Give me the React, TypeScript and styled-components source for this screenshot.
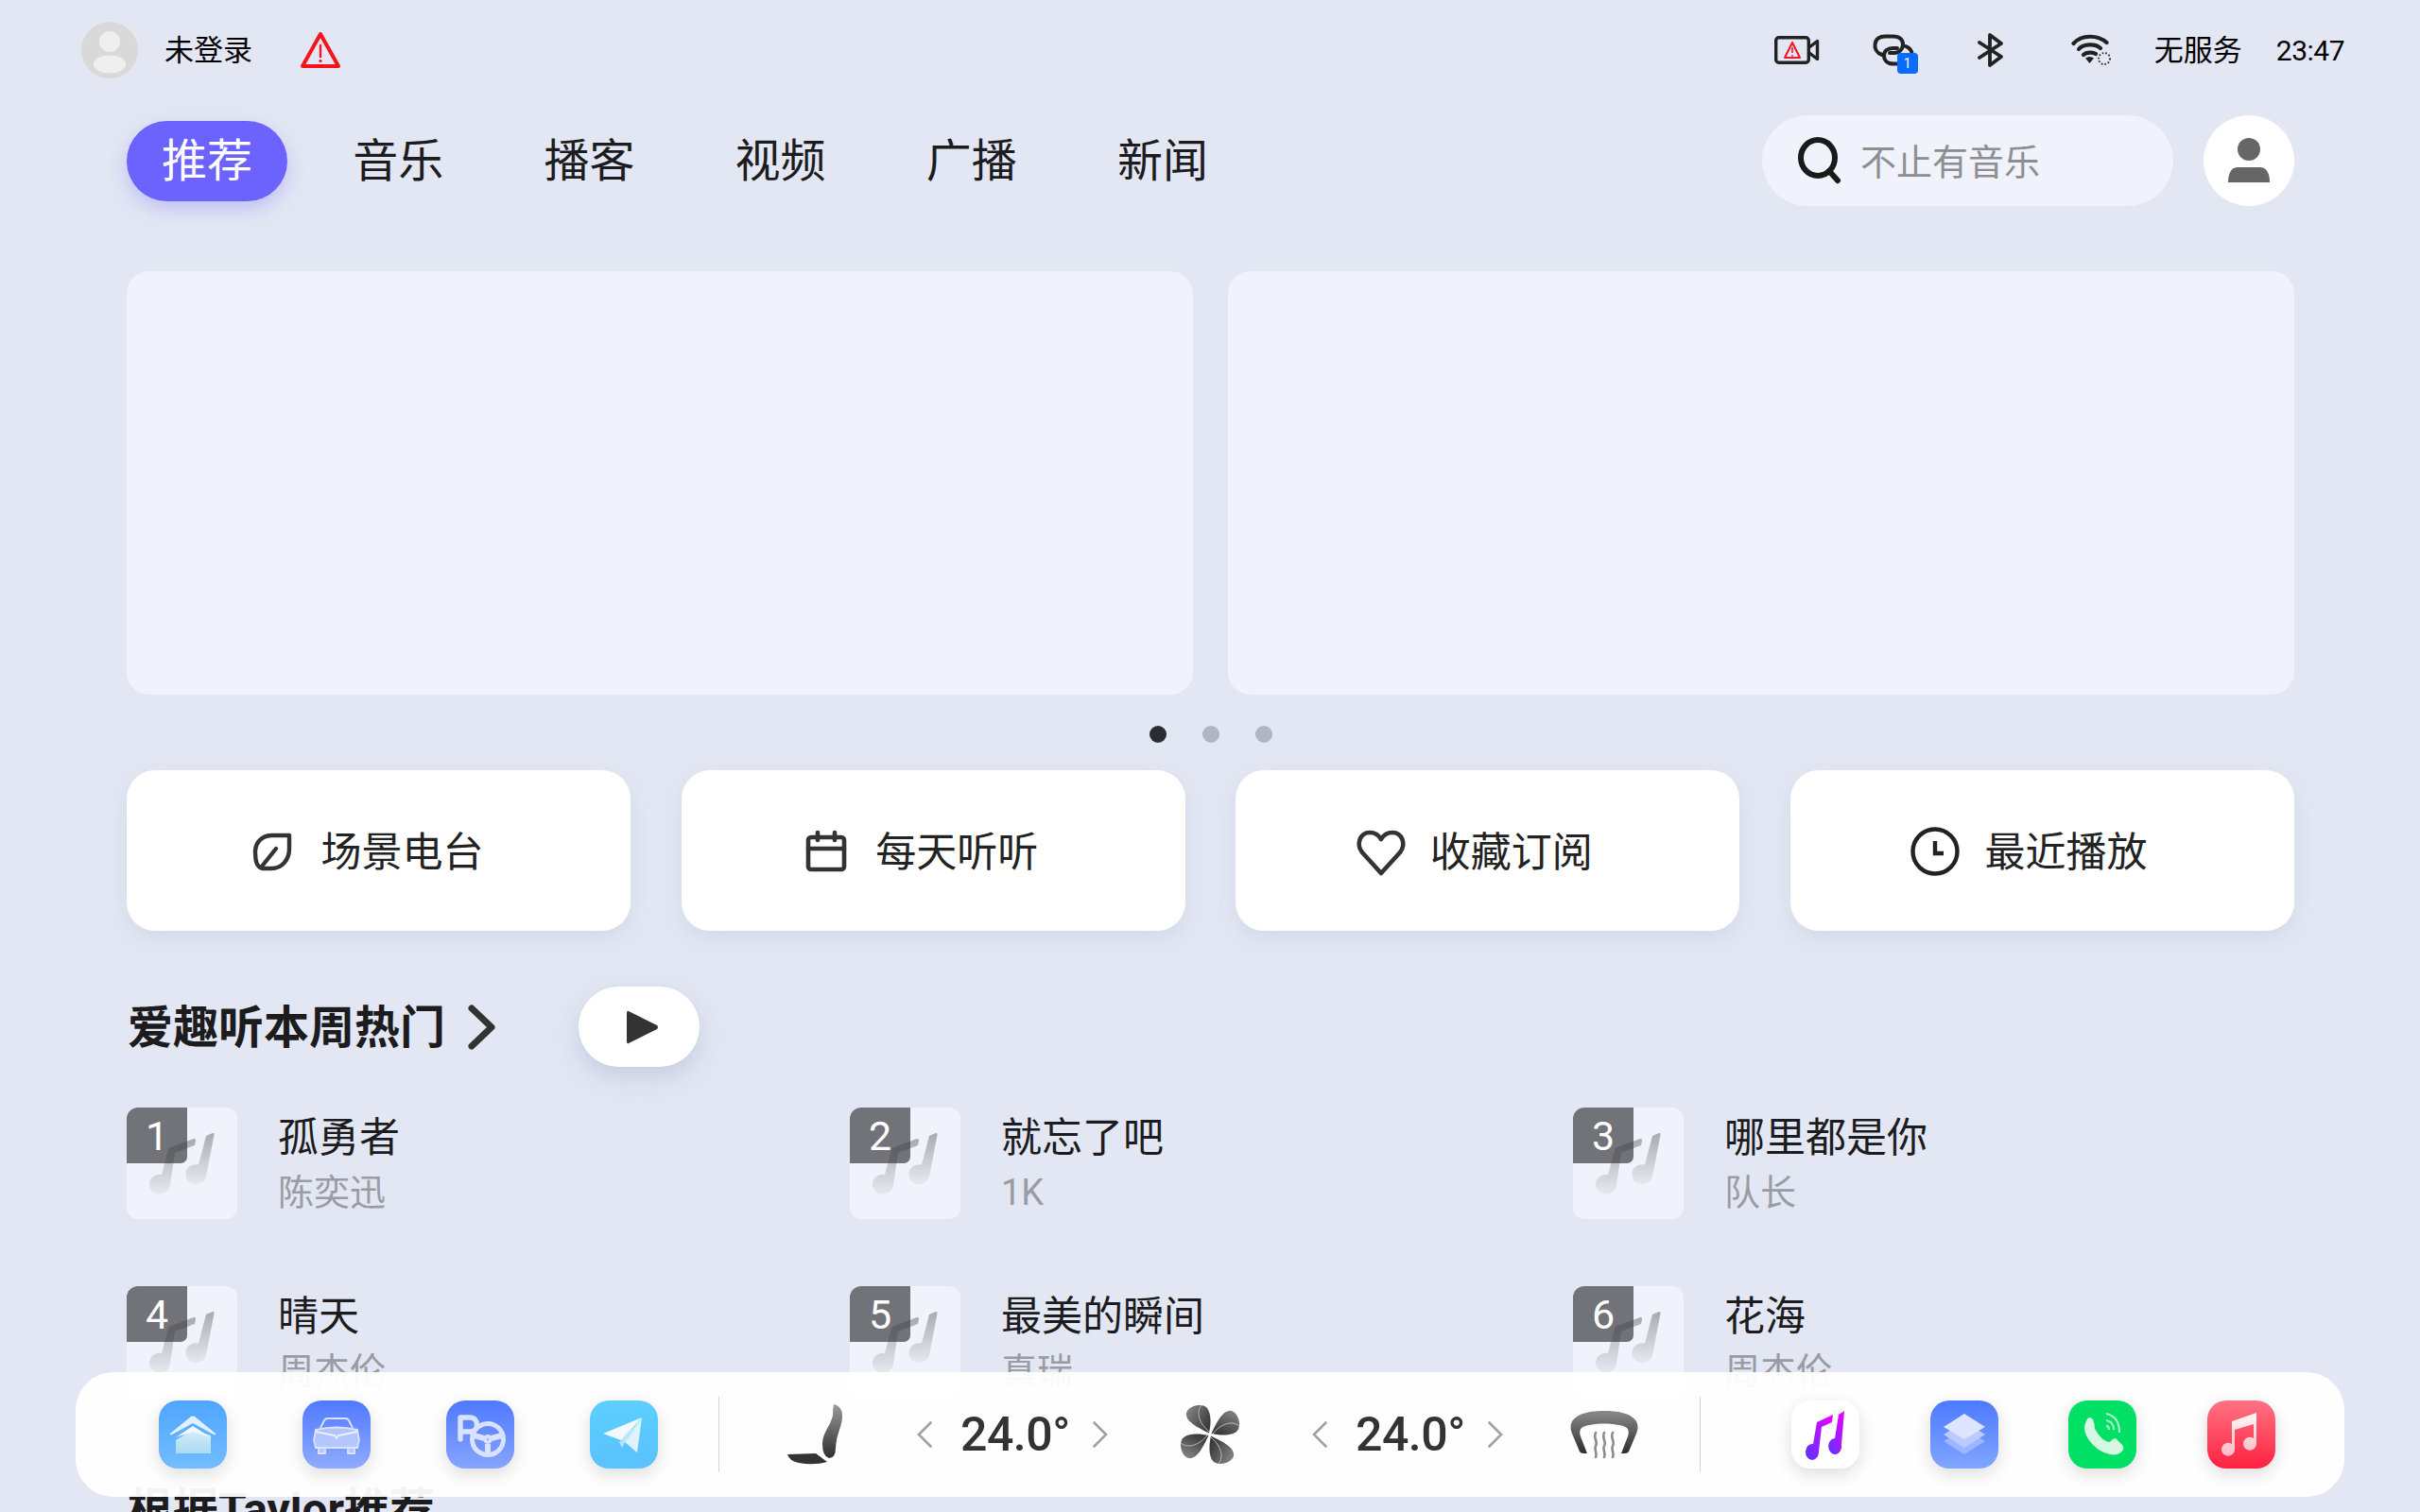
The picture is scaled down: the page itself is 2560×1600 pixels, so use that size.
import React from 'react'
import styled, { createGlobalStyle } from 'styled-components'

const CJK = `Roboto, 'Noto Sans CJK SC', sans-serif`

const GlobalStyle = createGlobalStyle`
    html, body {
        margin: 0;
        padding: 0;
        background: #e3e7f3;
    }
    * {
        box-sizing: border-box;
    }
`

const Page = styled.div`
    position: relative;
    width: 2560px;
    height: 1600px;
    overflow: hidden;
    background: #e3e7f3;
    font-family: ${CJK};
    color: #1c1c1e;
`

const StatusBar = styled.div`
    display: flex;
    align-items: center;
    height: 106px;
    padding: 0 80px 0 86px;
`

const StatusLeft = styled.div`
    display: flex;
    align-items: center;
`

const StatusLabel = styled.span`
    font-size: 31px;
    line-height: 40px;
    padding-top: 2px;
    color: #000;
`

const LoginLabel = styled(StatusLabel)`
    margin: 0 50px 0 28px;
`

const StatusRight = styled.div`
    display: flex;
    align-items: center;
    margin-left: auto;
`

const StatusIcon = styled.div<{ $gap: number }>`
    position: relative;
    display: flex;
    margin-right: ${p => p.$gap}px;
`

const LinkBadge = styled.span`
    position: absolute;
    left: 26px;
    top: 20px;
    width: 22px;
    height: 22px;
    border-radius: 4px;
    background: #0a6cff;
    color: #fff;
    font-size: 14px;
    line-height: 22px;
    text-align: center;
`

const ClockLabel = styled(StatusLabel)`
    margin-left: 36px;
    font-size: 30px;
    letter-spacing: -0.5px;
`

const Content = styled.main`
    padding: 0 133px 0 134px;
`

const NavRow = styled.nav`
    display: flex;
    align-items: center;
    height: 96px;
    margin-top: 16px;
`

const Tab = styled.div<{ $active?: boolean }>`
    height: 85px;
    padding: 0 37px;
    margin-right: 32.2px;
    border-radius: 43px;
    font-size: 48px;
    line-height: 85px;
    color: ${p => (p.$active ? '#fff' : '#1c1c1e')};
    background: ${p => (p.$active ? '#6c63ff' : 'transparent')};
    box-shadow: ${p => (p.$active ? '0 8px 20px rgba(108, 99, 255, 0.3)' : 'none')};
`

const SearchBox = styled.div`
    display: flex;
    align-items: center;
    width: 435px;
    height: 96px;
    margin-left: auto;
    padding-left: 36px;
    border-radius: 48px;
    background: #f0f3fc;
`

const SearchText = styled.span`
    margin-left: 20px;
    padding-bottom: 3px;
    font-size: 38px;
    color: #8e8e90;
`

const ProfileButton = styled.div`
    display: flex;
    align-items: center;
    justify-content: center;
    width: 96px;
    height: 96px;
    margin-left: 32px;
    border-radius: 50%;
    background: #fff;
`

const BannerRow = styled.div`
    display: grid;
    grid-template-columns: 1fr 1fr;
    gap: 37px;
    margin-top: 69px;
`

const Banner = styled.div`
    height: 448px;
    border-radius: 24px;
    background: #f0f3fc;
`

const Dots = styled.div`
    display: flex;
    justify-content: center;
    gap: 38px;
    margin-top: 33px;
`

const Dot = styled.span<{ $active?: boolean }>`
    width: 18px;
    height: 18px;
    border-radius: 50%;
    background: ${p => (p.$active ? '#2a2d33' : '#b1b5c3')};
`

const CardRow = styled.div`
    display: grid;
    grid-template-columns: repeat(4, 533px);
    justify-content: space-between;
    margin-top: 29px;
`

const Card = styled.div`
    display: flex;
    align-items: center;
    justify-content: center;
    gap: 24px;
    height: 170px;
    padding: 2px 30px 0 0;
    border-radius: 30px;
    background: #fff;
    box-shadow: 0 8px 20px rgba(190, 198, 222, 0.4);
    font-size: 43px;
    color: #222;
`

const CardLabel = styled.span`
    padding-bottom: 6px;
`

const SectionHead = styled.div`
    display: flex;
    align-items: center;
    height: 85px;
    margin-top: 59px;
`

const SectionTitle = styled.h2`
    margin: 0 0 0 1px;
    padding-top: 2px;
    font-size: 48px;
    line-height: 60px;
    font-weight: 700;
    color: #1c1c1e;
`

const Chevron = styled.svg`
    margin-left: 22px;
`

const PlayButton = styled.div`
    display: flex;
    align-items: center;
    justify-content: center;
    width: 128px;
    height: 85px;
    margin-left: 87px;
    padding-left: 8px;
    border-radius: 43px;
    background: #fff;
    box-shadow: 0 10px 24px rgba(170, 180, 210, 0.5);
`

const SongGrid = styled.div`
    display: grid;
    grid-template-columns: repeat(3, 765px);
    row-gap: 71px;
    margin-top: 43px;
`

const Song = styled.div`
    display: flex;
    gap: 43px;
`

const Thumb = styled.div`
    position: relative;
    flex: none;
    width: 117px;
    height: 118px;
    overflow: hidden;
    border-radius: 12px;
    background: #f0f3fc;
`

const RankBadge = styled.span`
    position: absolute;
    left: 0;
    top: 0;
    width: 64px;
    height: 59px;
    border-bottom-right-radius: 7px;
    background: rgba(60, 60, 64, 0.7);
    color: #fff;
    font-size: 43px;
    line-height: 61px;
    text-align: center;
`

const SongText = styled.div`
    display: flex;
    flex-direction: column;
    padding-top: 4px;
`

const SongTitle = styled.span`
    font-size: 43px;
    line-height: 56px;
    color: #1c1c1e;
`

const SongArtist = styled.span`
    margin-top: 6px;
    font-size: 38px;
    line-height: 48px;
    color: #9a9ca4;
`

const NextTitle = styled(SectionTitle)`
    margin-top: 87px;
`

const Dock = styled.footer`
    position: absolute;
    left: 80px;
    top: 1452px;
    display: flex;
    align-items: center;
    width: 2400px;
    height: 132px;
    padding-left: 88px;
    border-radius: 40px;
    background: rgba(255, 255, 255, 0.95);
`

const AppGroup = styled.div<{ $gap: number; $left?: number }>`
    display: flex;
    gap: ${p => p.$gap}px;
    margin-left: ${p => p.$left || 0}px;
`

const AppIcon = styled.div<{ $bg: string }>`
    display: flex;
    width: 72px;
    height: 72px;
    overflow: hidden;
    border-radius: 20px;
    background: ${p => p.$bg};
    box-shadow: 0 6px 18px rgba(0, 0, 0, 0.13);
`

const DockDivider = styled.div<{ $left: number }>`
    width: 1px;
    height: 80px;
    margin-left: ${p => p.$left}px;
    background: #d4d4d6;
`

const Climate = styled.div`
    display: flex;
    align-items: center;
    gap: 77px;
    margin-left: 70px;
`

const TempControl = styled.div`
    display: flex;
    align-items: center;
    gap: 30px;
`

const TempValue = styled.span`
    width: 110px;
    font-size: 50px;
    line-height: 60px;
    font-weight: 500;
    letter-spacing: -0.5px;
    color: #333;
    white-space: nowrap;
`

const Defrost = styled.svg`
    margin-left: -6px;
`

const songs = [
    { rank: 1, title: '孤勇者', artist: '陈奕迅' },
    { rank: 2, title: '就忘了吧', artist: '1K' },
    { rank: 3, title: '哪里都是你', artist: '队长' },
    { rank: 4, title: '晴天', artist: '周杰伦' },
    { rank: 5, title: '最美的瞬间', artist: '真瑞' },
    { rank: 6, title: '花海', artist: '周杰伦' },
]

const tabs = ['推荐', '音乐', '播客', '视频', '广播', '新闻']

function Avatar() {
    return (
        <svg width="60" height="60" viewBox="0 0 60 60">
            <circle cx="30" cy="30" r="30" fill="#d9d9d9" />
            <circle cx="30" cy="21" r="11" fill="#efefef" />
            <ellipse cx="30" cy="45" rx="17" ry="9.5" fill="#efefef" />
        </svg>
    )
}

function WarningIcon() {
    return (
        <svg width="44" height="40" viewBox="0 0 44 40">
            <path d="M22 3L41 37H3Z" fill="none" stroke="#f5141c" strokeWidth="4" strokeLinejoin="round" />
            <path d="M22 15V27" stroke="#f5141c" strokeWidth="2.4" strokeLinecap="round" />
            <circle cx="22" cy="31.5" r="1.6" fill="#f5141c" />
        </svg>
    )
}

function CameraIcon() {
    return (
        <svg width="48" height="30" viewBox="0 0 48 30">
            <rect x="1.7" y="1.7" width="34.6" height="26.6" rx="3" fill="none" stroke="#222" strokeWidth="3.4" />
            <path d="M37 12L45.5 5.5V24.5L37 18" fill="none" stroke="#222" strokeWidth="3.4" strokeLinejoin="round" />
            <path d="M19 7L27 23H11Z" fill="none" stroke="#f5141c" strokeWidth="2" strokeLinejoin="round" />
            <path d="M19 12V18M19 20V21.5" stroke="#f5141c" strokeWidth="1.6" />
        </svg>
    )
}

function LinkIcon() {
    return (
        <svg width="44" height="34" viewBox="0 0 44 34" fill="none" stroke="#222" strokeWidth="4" strokeLinecap="round">
            <path d="M10 22C4 20 2 15 2.5 11C3 5 8 2.5 13 2.5H22C28 2.5 32 6 32 11C32 16 28 20 23 20H18" />
            <path d="M35 13C40 15 42 19 41.5 23C40.5 29 36 31.5 31 31.5H22C16 31.5 12 28 12 23C12 18 16 15 21 15H26" />
        </svg>
    )
}

function BluetoothIcon() {
    return (
        <svg width="30" height="36" viewBox="0 0 30 36" fill="none" stroke="#222" strokeWidth="3.8" strokeLinejoin="round" strokeLinecap="round">
            <path d="M3 10L26 25L14 34V2L26 11L3 26" />
        </svg>
    )
}

function WifiIcon() {
    return (
        <svg width="42" height="34" viewBox="0 0 42 34" fill="none" stroke="#222" strokeWidth="4.2" strokeLinecap="round">
            <path d="M2.5 10C11 0.5 28 0.5 37.5 9" />
            <path d="M8 16C13 10 26 10 31 15" />
            <path d="M13 22C16 19 23 19 26 21" />
            <path d="M19.5 31L15 25.5C18 23.5 21 23.5 24 25.5Z" fill="#222" stroke="none" />
            <circle cx="35" cy="26" r="6" strokeWidth="1.8" strokeDasharray="1.6 2" strokeLinecap="butt" />
        </svg>
    )
}

function SearchIcon() {
    return (
        <svg width="48" height="52" viewBox="0 0 48 52" fill="none" stroke="#1a1a1a" strokeLinecap="round">
            <ellipse cx="23" cy="23" rx="18" ry="19" strokeWidth="6" />
            <path d="M35 37L44 47" strokeWidth="6" />
        </svg>
    )
}

function ProfileIcon() {
    return (
        <svg width="46" height="48" viewBox="0 0 46 48" fill="#666">
            <ellipse cx="23" cy="12" rx="12" ry="12" />
            <path d="M1 47C1 40 3 31 11 31H35C43 31 45 40 45 47Z" />
        </svg>
    )
}

function LeafIcon() {
    return (
        <svg width="56" height="56" viewBox="0 0 56 56" fill="none" stroke="#333" strokeWidth="4.4" strokeLinejoin="round" strokeLinecap="round">
            <path d="M46 11H28C17 11 11 18 10 27C10 37 11 45 18 46H27C39 46 46 36 46 25Z" />
            <path d="M16 45L32 25" />
        </svg>
    )
}

function CalendarIcon() {
    return (
        <svg width="56" height="56" viewBox="0 0 56 56" fill="none" stroke="#333" strokeWidth="4.6" strokeLinecap="round">
            <rect x="9" y="13" width="38" height="34" rx="3" />
            <path d="M9 25H47M19 8V16M37 8V16" />
        </svg>
    )
}

function HeartIcon() {
    return (
        <svg width="56" height="56" viewBox="0 0 56 56" fill="none" stroke="#333" strokeWidth="4.6" strokeLinejoin="round">
            <path d="M28 51L8 29C1 20 6 8 16 8C21 8 25 10 28 15C31 10 35 8 40 8C50 8 55 20 48 29Z" />
        </svg>
    )
}

function ClockIcon() {
    return (
        <svg width="56" height="56" viewBox="0 0 56 56" fill="none" stroke="#222" strokeWidth="4.4">
            <circle cx="28" cy="28" r="23.5" />
            <path d="M28 17V30H37" />
        </svg>
    )
}

function NoteArt({ id }: { id: number }) {
    return (
        <svg width="117" height="118" viewBox="0 0 117 118">
            <defs>
                <linearGradient id={`note-${id}`} x1="0" y1="0" x2="0" y2="1">
                    <stop offset="0" stopColor="#a9abb1" />
                    <stop offset="1" stopColor="#e7e9f0" />
                </linearGradient>
            </defs>
            <path d="M44 45Q44 43 47 42L71 33Q73.5 32.5 73 35L72 40L51 48L46 82A11 10.5 0 1 1 37 71Z" fill={`url(#note-${id})`} />
            <path d="M84 30L91 27Q93 26.5 92.5 29L84 73A11 10.5 0 1 1 76 60.5Z" fill={`url(#note-${id})`} />
        </svg>
    )
}

function HomeApp() {
    return (
        <svg width="72" height="72" viewBox="0 0 72 72">
            <defs>
                <linearGradient id="home-body" x1="0" y1="0" x2="0" y2="1">
                    <stop offset="0" stopColor="#d8ecfa" />
                    <stop offset="1" stopColor="#a8dbee" />
                </linearGradient>
            </defs>
            <path d="M18 42L36 31L55 37V56H18Z" fill="url(#home-body)" />
            <path d="M18 39L36 27L55 39L36 33Z" fill="#f2f9ff" />
            <path d="M12 35L34 17Q36 16 38 17L60 35Q61 37 58 36L36 24L14 36Q11 37 12 35Z" fill="#e2f1ff" />
        </svg>
    )
}

function CarApp() {
    return (
        <svg width="72" height="72" viewBox="0 0 72 72" fill="none" stroke="#dbe3ff" strokeWidth="1.8">
            <path d="M19 29L23 21Q24 19 27 19H45Q48 19 49 21L53 29" />
            <path d="M14 31Q36 26 58 31L60 42L58 50H14L12 42Z" fill="#dbe3ff" fillOpacity="0.62" />
            <path d="M14 33L34 37L36 40L38 37L58 33" stroke="#eef2ff" />
            <path d="M17 51V56H24V51M48 51V56H55V51" fill="#dbe3ff" fillOpacity="0.6" />
        </svg>
    )
}

function ParkApp() {
    return (
        <svg width="72" height="72" viewBox="0 0 72 72" fill="none" stroke="#d9e2ff">
            <path d="M15 41V18H25C35 18 35 33 25 33H15" strokeWidth="5.4" strokeLinecap="round" strokeLinejoin="round" />
            <circle cx="44" cy="41" r="16.5" strokeWidth="5" />
            <circle cx="44" cy="41" r="3" fill="#7f9cff" strokeWidth="4" />
            <path d="M29 37L40 40M59 37L48 40M44 46V56" strokeWidth="6" />
        </svg>
    )
}

function PlaneApp() {
    return (
        <svg width="72" height="72" viewBox="0 0 72 72">
            <path d="M14 35L55 18L33 42Z" fill="#f2faff" />
            <path d="M55 18L50 55L37 44Z" fill="#dff3ff" />
            <path d="M33 42L37 44L34 50L31 44Z" fill="#b2e4fb" />
            <path d="M55 18L33 42L37 44Z" fill="#b7e7fb" />
        </svg>
    )
}

function MusicApp() {
    return (
        <svg width="72" height="72" viewBox="0 0 72 72">
            <defs>
                <linearGradient id="music-purple" x1="0" y1="1" x2="1" y2="0">
                    <stop offset="0" stopColor="#5a35ff" />
                    <stop offset="1" stopColor="#f000ff" />
                </linearGradient>
            </defs>
            <path d="M27 23L44 15L43 23L32 28L29 54A7 8.5 0 1 1 23 46Z" fill="url(#music-purple)" />
            <path d="M50 15L56 11L53 47A7 8.5 0 1 1 46 40Z" fill="url(#music-purple)" />
        </svg>
    )
}

function StackApp() {
    return (
        <svg width="72" height="72" viewBox="0 0 72 72">
            <path d="M36 30L58 43L36 57L14 43Z" fill="#9fb5ff" />
            <path d="M36 22L58 36L36 50L14 36Z" fill="#bccbff" />
            <path d="M36 14L58 28L36 41L14 28Z" fill="#dde5ff" />
        </svg>
    )
}

function PhoneApp() {
    return (
        <svg width="72" height="72" viewBox="0 0 72 72" fill="none">
            <path d="M19 22Q15 28 19 37Q27 53 44 57Q54 59 58 52Q59 48 56 46L50 40Q47 40 44 44Q36 44 28 30Q28 25 26 20L23 18Q20 18 19 22Z" fill="#d5f7e3" />
            <path d="M40 14C50 16 54 23 54 34M40 21C46 22 48 26 48 31M40 27C42 27 43 29 43 31" stroke="#b5f1cd" strokeWidth="2" />
        </svg>
    )
}

function AppleMusicApp() {
    return (
        <svg width="72" height="72" viewBox="0 0 72 72">
            <defs>
                <linearGradient id="apple-note" x1="0" y1="0" x2="0" y2="1">
                    <stop offset="0" stopColor="#fff" stopOpacity="0.95" />
                    <stop offset="1" stopColor="#ffd2da" stopOpacity="0.85" />
                </linearGradient>
            </defs>
            <path d="M26 22L52 13V46A7 7 0 1 1 49 40V25L29 31V52A7 7 0 1 1 26 46Z" fill="url(#apple-note)" />
        </svg>
    )
}

function SeatIcon() {
    return (
        <svg width="62" height="64" viewBox="0 0 62 64">
            <defs>
                <linearGradient id="seat-back" x1="0" y1="0" x2="0" y2="1">
                    <stop offset="0" stopColor="#9a9a9a" />
                    <stop offset="1" stopColor="#2e2e2e" />
                </linearGradient>
            </defs>
            <path d="M51 0Q60 2 60 12C60 24 54 30 53 46Q53 57 46 57Q39 55 39 42C39 30 47 24 50 12Q50 4 51 0Z" fill="url(#seat-back)" />
            <path d="M2 53L32 52L44 61Q30 65 14 62Q4 60 2 53Z" fill="#333" />
        </svg>
    )
}

function FanIcon() {
    return (
        <svg width="62" height="64" viewBox="-31 -32 62 64">
            <defs>
                <linearGradient id="fan-blade" x1="0" y1="0" x2="1" y2="0.6">
                    <stop offset="0" stopColor="#8c8c8c" />
                    <stop offset="1" stopColor="#3a3a3a" />
                </linearGradient>
            </defs>
            {[0, 90, 180, 270].map(angle => (
                <g key={angle} transform={`rotate(${angle})`}>
                    <path
                        d="M-1 -1.5C-10 -6 -27 -13 -25 -23C-22 -31 -9 -33 -4 -29C2 -23 1 -10 -1 -1.5Z"
                        fill="url(#fan-blade)"
                    />
                    <path d="M-9 -31C-15 -24 -12 -12 -1 -3" fill="none" stroke="#c4c4c4" strokeWidth="0.9" />
                </g>
            ))}
        </svg>
    )
}

function ArrowButton({ flip }: { flip?: boolean }) {
    return (
        <svg width="16" height="28" viewBox="0 0 16 28" fill="none" stroke="#a0a0a0" strokeWidth="2.6" strokeLinecap="round">
            <path d={flip ? 'M1.5 1.5L14 14L1.5 26.5' : 'M14.5 1.5L2 14L14.5 26.5'} />
        </svg>
    )
}

function TempBlock() {
    return (
        <TempControl>
            <ArrowButton />
            <TempValue>24.0°</TempValue>
            <ArrowButton flip />
        </TempControl>
    )
}

const CardIcons = [
    { icon: <LeafIcon />, label: '场景电台' },
    { icon: <CalendarIcon />, label: '每天听听' },
    { icon: <HeartIcon />, label: '收藏订阅' },
    { icon: <ClockIcon />, label: '最近播放' },
]

export default function App(): React.ReactElement {
    return (
        <Page>
            <GlobalStyle />
            <StatusBar>
                <StatusLeft>
                    <Avatar />
                    <LoginLabel>未登录</LoginLabel>
                    <WarningIcon />
                </StatusLeft>
                <StatusRight>
                    <StatusIcon $gap={56}><CameraIcon /></StatusIcon>
                    <StatusIcon $gap={66}>
                        <LinkIcon />
                        <LinkBadge>1</LinkBadge>
                    </StatusIcon>
                    <StatusIcon $gap={70}><BluetoothIcon /></StatusIcon>
                    <StatusIcon $gap={46}><WifiIcon /></StatusIcon>
                    <StatusLabel>无服务</StatusLabel>
                    <ClockLabel>23:47</ClockLabel>
                </StatusRight>
            </StatusBar>

            <Content>
                <NavRow>
                    {tabs.map((tab, i) => (
                        <Tab key={tab} $active={i === 0}>{tab}</Tab>
                    ))}
                    <SearchBox>
                        <SearchIcon />
                        <SearchText>不止有音乐</SearchText>
                    </SearchBox>
                    <ProfileButton><ProfileIcon /></ProfileButton>
                </NavRow>

                <BannerRow>
                    <Banner />
                    <Banner />
                </BannerRow>

                <Dots>
                    <Dot $active />
                    <Dot />
                    <Dot />
                </Dots>

                <CardRow>
                    {CardIcons.map(card => (
                        <Card key={card.label}>
                            {card.icon}
                            <CardLabel>{card.label}</CardLabel>
                        </Card>
                    ))}
                </CardRow>

                <SectionHead>
                    <SectionTitle>爱趣听本周热门</SectionTitle>
                    <Chevron width="32" height="48" viewBox="0 0 32 48" fill="none" stroke="#333" strokeWidth="7" strokeLinecap="round" strokeLinejoin="round">
                        <path d="M6 4L27 24L6 44" />
                    </Chevron>
                    <PlayButton>
                        <svg width="36" height="40" viewBox="0 0 36 40">
                            <path d="M3 3L33 18Q35 20 33 22L3 37Q1 38 1 35V5Q1 2 3 3Z" fill="#333" />
                        </svg>
                    </PlayButton>
                </SectionHead>

                <SongGrid>
                    {songs.map(song => (
                        <Song key={song.rank}>
                            <Thumb>
                                <NoteArt id={song.rank} />
                                <RankBadge>{song.rank}</RankBadge>
                            </Thumb>
                            <SongText>
                                <SongTitle>{song.title}</SongTitle>
                                <SongArtist>{song.artist}</SongArtist>
                            </SongText>
                        </Song>
                    ))}
                </SongGrid>

                <NextTitle>根据Taylor推荐</NextTitle>
            </Content>

            <Dock>
                <AppGroup $gap={80}>
                    <AppIcon $bg="linear-gradient(180deg, #4fa5ff, #73bdff)"><HomeApp /></AppIcon>
                    <AppIcon $bg="linear-gradient(180deg, #5079ff, #8fabff)"><CarApp /></AppIcon>
                    <AppIcon $bg="linear-gradient(180deg, #5079ff, #86a4ff)"><ParkApp /></AppIcon>
                    <AppIcon $bg="linear-gradient(180deg, #5ccfff, #5ac2fc)"><PlaneApp /></AppIcon>
                </AppGroup>
                <DockDivider $left={64} />
                <Climate>
                    <SeatIcon />
                    <TempBlock />
                    <FanIcon />
                    <TempBlock />
                    <Defrost width="72" height="52" viewBox="0 0 72 52">
                        <defs>
                            <linearGradient id="defrost" x1="0" y1="0" x2="0" y2="1">
                                <stop offset="0" stopColor="#8a8a8a" />
                                <stop offset="1" stopColor="#2e2e2e" />
                            </linearGradient>
                        </defs>
                        <path
                            d="M36 1C50 1 64 3 70 12C72 16 72 20 70 25L62 44Q61 46 58 46L54 46L61 28Q63 22 60 19C52 13 20 13 12 19Q9 22 11 28L18 46L14 46Q11 46 10 44L2 25C0 20 0 16 2 12C8 3 22 1 36 1Z"
                            fill="url(#defrost)"
                        />
                        <g fill="none" stroke="#8c8c8c" strokeWidth="2.6" strokeLinecap="round">
                            <path d="M27 24C24 30 30 34 27 38C25 42 29 46 27 50" />
                            <path d="M36 24C33 30 39 34 36 38C34 42 38 46 36 50" />
                            <path d="M45 24C42 30 48 34 45 38C43 42 47 46 45 50" />
                        </g>
                    </Defrost>
                </Climate>
                <DockDivider $left={65} />
                <AppGroup $gap={74.5} $left={96}>
                    <AppIcon $bg="#fff"><MusicApp /></AppIcon>
                    <AppIcon $bg="linear-gradient(180deg, #4c7aff, #80a6ff)"><StackApp /></AppIcon>
                    <AppIcon $bg="#00e064"><PhoneApp /></AppIcon>
                    <AppIcon $bg="linear-gradient(180deg, #ff7383, #ff2140)"><AppleMusicApp /></AppIcon>
                </AppGroup>
            </Dock>
        </Page>
    )
}
